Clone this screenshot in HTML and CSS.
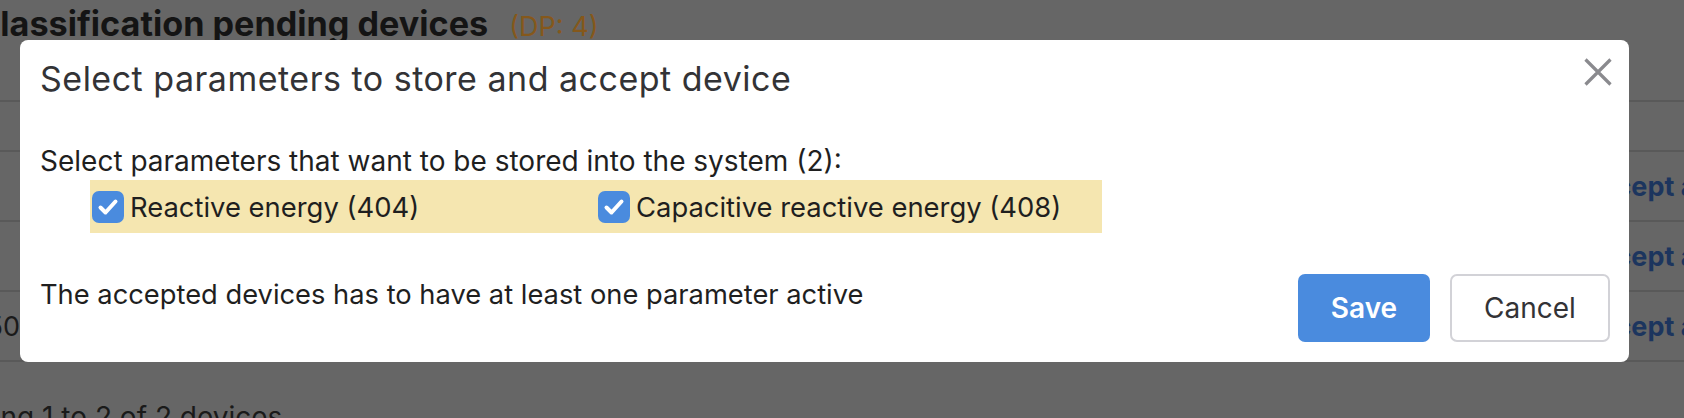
FILE: index.html
```html
<!DOCTYPE html>
<html lang="en">
<head>
<meta charset="utf-8">
<title>Select parameters</title>
<link rel="stylesheet" href="styles.css">
</head>
<body>
<div class="page">
  <h1 class="page-title"><span class="page-title-text">Classification pending devices</span><span class="dp">(DP: 4)</span></h1>
  <div class="table">
    <div class="row row-head"></div>
    <div class="row"><span class="cell-num"></span><span class="cell-fill"></span><span class="cell-action">Accept all</span></div>
    <div class="row"><span class="cell-num"></span><span class="cell-fill"></span><span class="cell-action">Accept all</span></div>
    <div class="row"><span class="cell-num">150</span><span class="cell-fill"></span><span class="cell-action">Accept all</span></div>
  </div>
  <p class="showing">Showing 1 to 2 of 2 devices</p>
</div>

<div class="modal" role="dialog">
  <div class="modal-header">
    <h2 class="modal-title">Select parameters to store and accept device</h2>
    <button class="close" aria-label="Close">
      <svg width="28" height="28" viewBox="0 0 28 28"><path d="M1.5 1.5 L26.5 26.5 M26.5 1.5 L1.5 26.5" stroke="#8a8a8e" stroke-width="3.2" fill="none"/></svg>
    </button>
  </div>
  <div class="modal-body">
    <p class="intro">Select parameters that want to be stored into the system (2):</p>
    <div class="params">
      <label class="param"><span class="check"><svg width="32" height="32" viewBox="0 0 32 32"><path d="M8.5 16.5 L13.5 21.5 L23.5 10.5" stroke="#fff" stroke-width="4" fill="none" stroke-linecap="round" stroke-linejoin="round"/></svg></span><span class="param-label">Reactive energy (404)</span></label>
      <label class="param"><span class="check"><svg width="32" height="32" viewBox="0 0 32 32"><path d="M8.5 16.5 L13.5 21.5 L23.5 10.5" stroke="#fff" stroke-width="4" fill="none" stroke-linecap="round" stroke-linejoin="round"/></svg></span><span class="param-label">Capacitive reactive energy (408)</span></label>
    </div>
  </div>
  <div class="modal-footer">
    <p class="note">The accepted devices has to have at least one parameter active</p>
    <div class="actions">
      <button class="btn btn-primary">Save</button>
      <button class="btn btn-default">Cancel</button>
    </div>
  </div>
</div>
</body>
</html>
```
FILE: styles.css
```css
* { box-sizing: border-box; }
html, body { margin: 0; padding: 0; }
body {
  background: #666666;
  overflow: hidden;
  width: 1684px;
  height: 418px;
  font-family: Inter, "Noto Sans", "Liberation Sans", sans-serif;
  color: #1a1a1a;
}
.page { width: 1684px; }
.page-title {
  margin: 0;
  height: 100px;
  padding-top: 4px;
  display: flex;
  align-items: baseline;
  font-size: 34.2px;
  line-height: 40px;
  font-weight: 700;
  color: #141414;
  white-space: nowrap;
}
.page-title-text { margin-left: -25px; }
.dp {
  margin-left: 21px;
  font-size: 27px;
  font-weight: 400;
  color: #85581b;
}
.table { border-top: 2px solid #595959; }
.row {
  height: 70px;
  border-bottom: 2px solid #595959;
  display: flex;
  align-items: center;
  font-size: 27px;
  white-space: nowrap;
}
.row-head { height: 50px; }
.cell-num {
  width: 20px;
  display: flex;
  justify-content: flex-end;
  color: #1a1a1a;
}
.cell-fill { flex: 1; }
.cell-action {
  width: 104px;
  font-weight: 700;
  color: #1c355e;
}
.showing {
  margin: 38px 0 0 -80px;
  font-size: 28px;
  line-height: 34px;
  color: #1a1a1a;
  white-space: nowrap;
}

.modal {
  position: fixed;
  left: 20px;
  top: 40px;
  width: 1609px;
  background: #ffffff;
  border-radius: 8px;
}
.modal-header {
  display: flex;
  justify-content: space-between;
  align-items: flex-start;
  padding: 19px 17px 0 20px;
}
.modal-title {
  margin: 0;
  font-size: 34px;
  line-height: 40px;
  letter-spacing: 0.5px;
  font-weight: 400;
  color: #333336;
}
.close {
  margin-top: -1px;
  padding: 0;
  border: 0;
  background: none;
  width: 28px;
  height: 28px;
  display: block;
}
.close svg { display: block; }
.modal-body { padding: 45px 0 0 20px; }
.intro {
  margin: 0;
  font-size: 28px;
  line-height: 34px;
  color: #1f1f1f;
}
.params {
  margin: 2px 0 0 50px;
  width: 1012px;
  height: 53px;
  background: #f5e6b0;
  display: flex;
}
.param {
  width: 506px;
  display: flex;
  align-items: center;
  padding-left: 2px;
  gap: 6px;
}
.check {
  width: 32px;
  height: 32px;
  border-radius: 7px;
  background: #4a8bde;
  display: block;
}
.check svg { display: block; }
.param-label {
  font-size: 27.4px;
  line-height: 34px;
  color: #1f1f1f;
}
.modal-footer {
  display: flex;
  justify-content: space-between;
  align-items: flex-start;
  margin-top: 41px;
  padding: 0 19px 20px 20px;
}
.note {
  margin: 4px 0 0 0;
  font-size: 27.3px;
  line-height: 34px;
  color: #1f1f1f;
}
.actions { display: flex; gap: 20px; }
.btn {
  height: 68px;
  border-radius: 7px;
  font-family: Inter, "Noto Sans", "Liberation Sans", sans-serif;
  font-size: 28px;
  padding: 0;
}
.btn-primary {
  width: 132px;
  background: #4a8bde;
  border: 0;
  color: #ffffff;
  font-weight: 600;
}
.btn-default {
  width: 160px;
  background: #ffffff;
  border: 2px solid #d2d2d7;
  color: #333336;
  font-weight: 400;
}
```
